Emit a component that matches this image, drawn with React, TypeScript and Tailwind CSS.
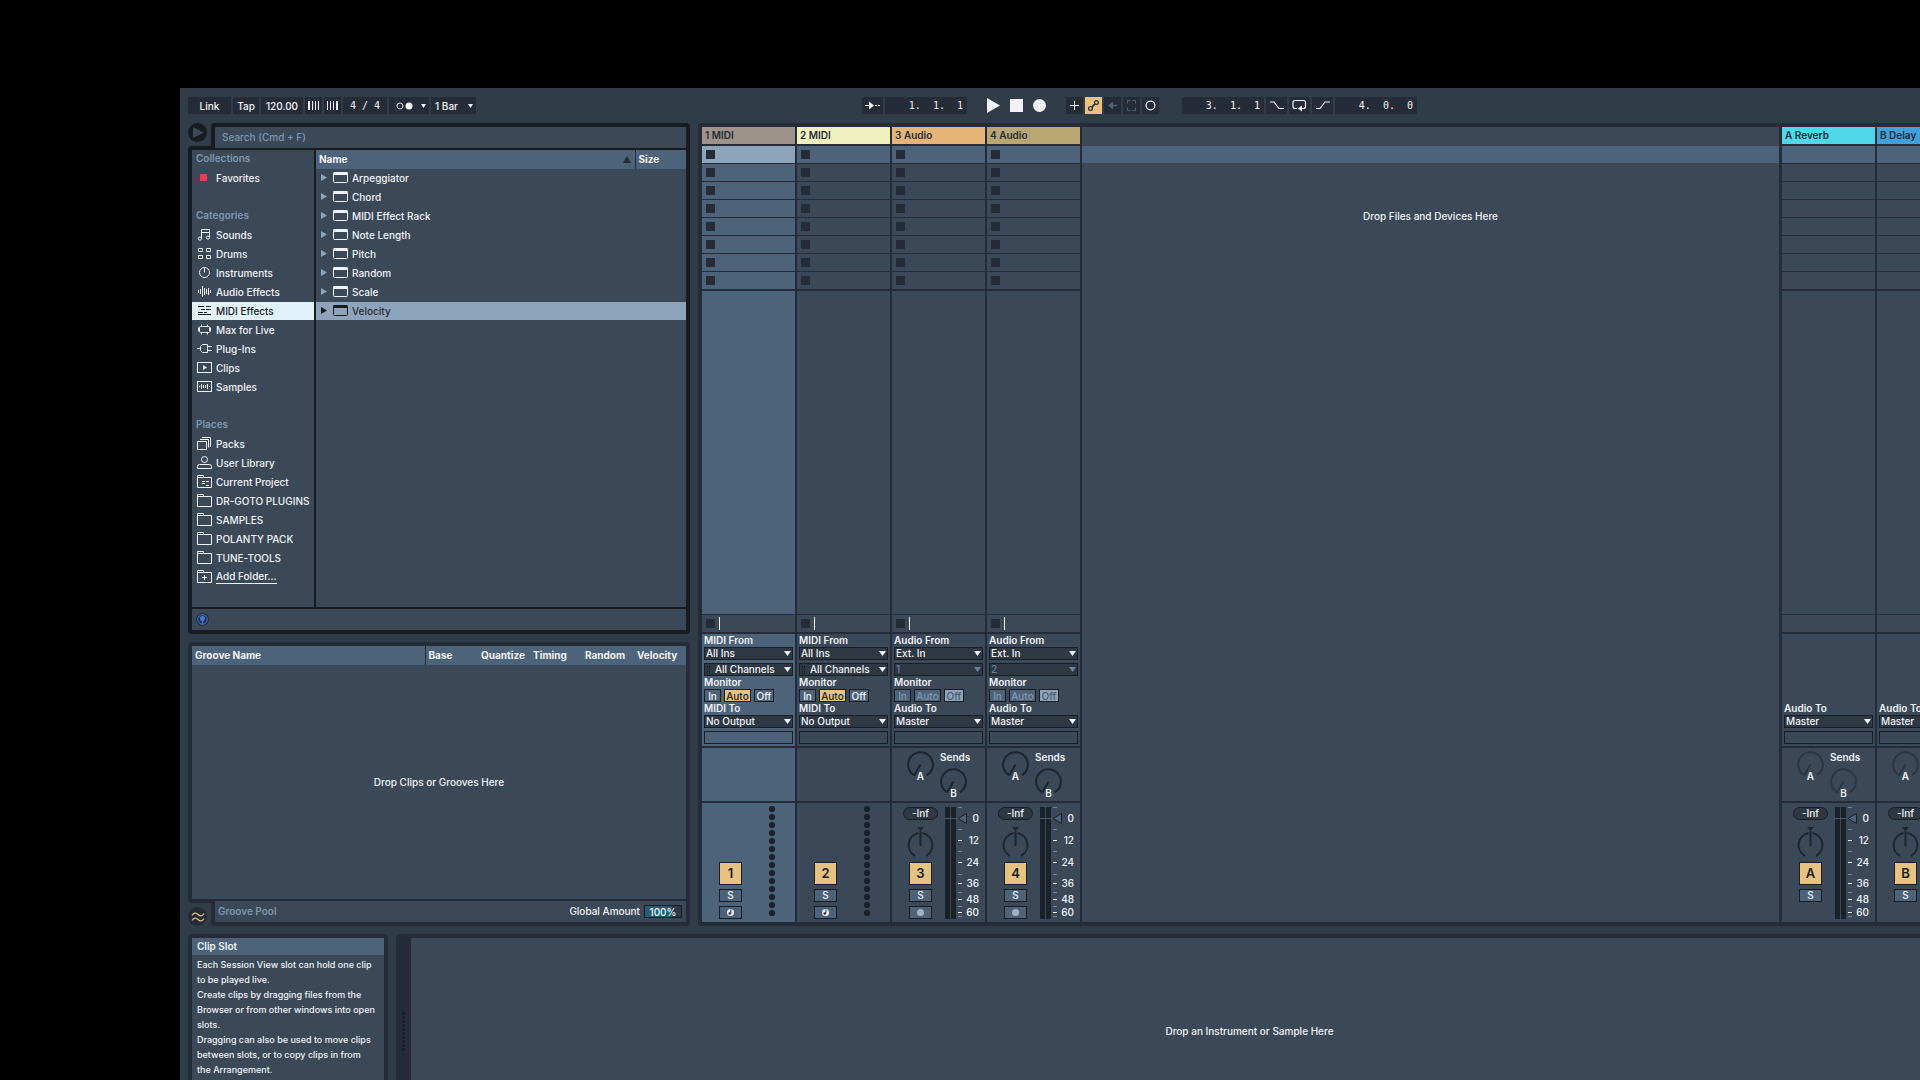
import React from "react";

type IconName =
  | "sounds"
  | "drums"
  | "instruments"
  | "audio"
  | "midi"
  | "max"
  | "plug"
  | "clips"
  | "samples"
  | "packs"
  | "user"
  | "project"
  | "folder"
  | "add";

const icons: Record<IconName, React.ReactNode> = {
  sounds: (
    <>
      <circle cx="2.9" cy="10.6" r="1.6" />
      <circle cx="10.9" cy="9.6" r="1.6" />
      <path d="M4.5 10.5V1.5h8v8M4.5 4.5h8" />
    </>
  ),
  drums: (
    <path d="M1.5 1.5h4v3h-4zM9.5 1.5h4v3h-4zM1.5 8.5h4v3h-4zM9.5 8.5h4v3h-4z" />
  ),
  instruments: (
    <>
      <circle cx="7.5" cy="6.5" r="5" />
      <path d="M7.5 1.5v5" />
    </>
  ),
  audio: (
    <path d="M1.5 5v3M3.5 4v5M5.5 1v11M7.5 3v7M9.5 4v5M11.5 3v7M13.5 5v3" />
  ),
  midi: <path d="M1 2.5h6M9 2.5h5M4 5.5h4M9 5.5h5M1 8.5h5M7 8.5h3M1 10.5h13" />,
  max: (
    <>
      <rect x="2.5" y="3.5" width="10" height="6" rx="1" />
      <path d="M4.5 3.5v-2M10.5 3.5v-2M4.5 9.5v2M10.5 9.5v2M1.5 4.500v4M13.5 4.500v4" />
    </>
  ),
  plug: (
    <path d="M0 6.5h3.5M5.5 2.5h5v8h-5l-2-2v-4zM10.5 4.5h4.500M10.5 8.5h4.500" />
  ),
  clips: (
    <>
      <rect x="0.5" y="1.5" width="14" height="10" />
      <path d="M6 4v5l4-2.500z" fill="currentColor" stroke="none" />
    </>
  ),
  samples: (
    <>
      <rect x="0.5" y="1.5" width="14" height="10" />
      <path d="M2.5 6v1M4.5 4v5M6.5 5v3M8.5 5v3M10.5 4v5M12.5 6v1" />
    </>
  ),
  packs: <path d="M.5 4.5h9v8h-9zM3 2.500h8.500v8M5 .5h8.500v9.500" />,
  user: (
    <>
      <circle cx="7.5" cy="3.500" r="3" />
      <path d="M.5 12.500v-2q0-2 2-2h10q2 0 2 2v2z" />
    </>
  ),
  project: (
    <path d="M.5 .5h6v2h8v10H.5zM.5 2.500h6M5 6.500h3M9 6.500h3M5 8.500h3M9 10.500h3" />
  ),
  folder: <path d="M.5 .5h6v2h8v10H.5zM.5 2.500h6" />,
  add: <path d="M.5 .5h6v2h8v10H.5zM.5 2.500h6M5 7.500h5M7.500 5v5" />,
};

const Icon = ({ name }: { name: IconName }) => (
  <svg
    width="15"
    height="13"
    viewBox="0 0 15 13"
    fill="none"
    stroke="currentColor"
    className="shrink-0"
  >
    {icons[name]}
  </svg>
);

const categories: { icon: IconName; label: string }[] = [
  { icon: "sounds", label: "Sounds" },
  { icon: "drums", label: "Drums" },
  { icon: "instruments", label: "Instruments" },
  { icon: "audio", label: "Audio Effects" },
  { icon: "midi", label: "MIDI Effects" },
  { icon: "max", label: "Max for Live" },
  { icon: "plug", label: "Plug-Ins" },
  { icon: "clips", label: "Clips" },
  { icon: "samples", label: "Samples" },
];

const places: { icon: IconName; label: string }[] = [
  { icon: "packs", label: "Packs" },
  { icon: "user", label: "User Library" },
  { icon: "project", label: "Current Project" },
  { icon: "folder", label: "DR-GOTO PLUGINS" },
  { icon: "folder", label: "SAMPLES" },
  { icon: "folder", label: "POLANTY PACK" },
  { icon: "folder", label: "TUNE-TOOLS" },
  { icon: "add", label: "Add Folder..." },
];

const devices = [
  "Arpeggiator",
  "Chord",
  "MIDI Effect Rack",
  "Note Length",
  "Pitch",
  "Random",
  "Scale",
  "Velocity",
];

type Track = {
  name: string;
  key: string;
  kind: "midi" | "audio" | "return";
  color: string;
  selected?: boolean;
  input?: string;
};

const tracks: Track[] = [
  { name: "1 MIDI", key: "1", kind: "midi", color: "bg-[#9d938c]", selected: true },
  { name: "2 MIDI", key: "2", kind: "midi", color: "bg-[#eff2bf]" },
  { name: "3 Audio", key: "3", kind: "audio", color: "bg-[#e6b575]", input: "1" },
  { name: "4 Audio", key: "4", kind: "audio", color: "bg-[#b9a771]", input: "2" },
];

const returns: Track[] = [
  { name: "A Reverb", key: "A", kind: "return", color: "bg-[#4fd8ea]" },
  { name: "B Delay", key: "B", kind: "return", color: "bg-[#3fa2dc]" },
];

/* ---------- Transport ---------- */

const toolButton =
  "flex h-[17px] items-center justify-center bg-[#252c37] text-[#f0f2f7]";

const TimeField = ({ label, value, width }: { label: string; value: string; width: string }) => (
  <input
    aria-label={label}
    defaultValue={value}
    className={`h-[17px] bg-[#252c37] pr-1 text-right font-['DejaVu_Sans_Mono',monospace] text-[10px] text-[#f0f2f7] outline-none ${width}`}
  />
);

const Transport = () => {
  return (
    <div className="grid grid-cols-[1fr_auto_1fr] items-center py-[9px] pr-[9px] pl-2">
      <div className="flex gap-[2px]">
        <button className={`${toolButton} w-[43px]`}>Link</button>
        <button className={`${toolButton} w-[26px]`}>Tap</button>
        <input
          aria-label="Tempo"
          defaultValue="120.00"
          className="h-[17px] w-[42px] bg-[#252c37] text-center text-[#f0f2f7] outline-none"
        />
        <button aria-label="Nudge down" className={`${toolButton} w-[17px]`}>
          <svg width="11" height="9" stroke="currentColor">
            <path d="M1 0v9" strokeWidth="2" />
            <path d="M4.500 0v9M7.500 0v9M10.500 0v9" />
          </svg>
        </button>
        <button aria-label="Nudge up" className={`${toolButton} w-[17px]`}>
          <svg width="11" height="9" stroke="currentColor">
            <path d="M.5 0v9M3.500 0v9M6.500 0v9" />
            <path d="M10 0v9" strokeWidth="2" />
          </svg>
        </button>
        <TimeField label="Time signature" value="4 / 4" width="w-[44px] pr-[7px]" />
        <button aria-label="Metronome" className={`${toolButton} w-[40px] gap-2 pl-1`}>
          <svg width="17" height="8" fill="none" stroke="currentColor">
            <circle cx="4" cy="4" r="3" />
            <circle cx="13" cy="4" r="3.500" fill="currentColor" stroke="none" />
          </svg>
          <svg width="5" height="4" fill="currentColor">
            <path d="M0 0h5L2.500 4z" />
          </svg>
        </button>
        <div className="relative">
          <select
            aria-label="Quantization"
            className="h-[17px] w-[45px] appearance-none bg-[#252c37] pl-1 text-[#f0f2f7] outline-none"
          >
            <option>1 Bar</option>
          </select>
          <svg
            width="5"
            height="4"
            fill="currentColor"
            className="pointer-events-none absolute top-[7px] right-[3px]"
          >
            <path d="M0 0h5L2.500 4z" />
          </svg>
        </div>
      </div>

      <div className="flex gap-[2px]">
        <button aria-label="Follow" className={`${toolButton} w-[21px]`}>
          <svg width="15" height="9" stroke="currentColor" fill="none">
            <path d="M0 4.500h5M10 4.500h2M13 4.500h2" />
            <path d="M4 0.500v8l5-4z" fill="currentColor" stroke="none" />
          </svg>
        </button>
        <TimeField label="Position" value="1.  1.  1" width="w-[82px]" />
        <div className="flex items-center gap-[10px] px-[18px] text-[#f0f2f7]">
          <button aria-label="Play">
            <svg width="13" height="15" fill="currentColor">
              <path d="M0 0v15l13-7.500z" />
            </svg>
          </button>
          <button aria-label="Stop" className="size-[13px] bg-current" />
          <button aria-label="Record" className="size-[13px] rounded-full bg-current" />
        </div>
        <button aria-label="Overdub" className={`${toolButton} w-[17px]`}>
          <svg width="9" height="9" stroke="currentColor">
            <path d="M4.500 0v9M0 4.500h9" />
          </svg>
        </button>
        <button
          aria-label="Automation arm"
          className="flex h-[17px] w-[17px] items-center justify-center bg-[#e8c27e] text-[#252c37]"
        >
          <svg width="11" height="11" stroke="currentColor" fill="none" strokeWidth="1.200">
            <circle cx="8.500" cy="2.500" r="1.900" />
            <circle cx="2.500" cy="8.500" r="1.900" />
            <path d="M7.200 3.900L3.800 7.100" strokeWidth="1.600" />
          </svg>
        </button>
        <button aria-label="Re-enable automation" className={`${toolButton} w-[17px]`}>
          <svg width="9" height="9" className="text-[#4c6379]" stroke="currentColor" fill="none">
            <path d="M3 4.500h6" strokeWidth="1.500" />
            <path d="M0 4.500L5 .5v8z" fill="currentColor" stroke="none" />
          </svg>
        </button>
        <button aria-label="Capture" className={`${toolButton} w-[17px]`}>
          <svg width="9" height="11" className="text-[#4c6379]" stroke="currentColor" fill="none">
            <path d="M.5 3.500v-3h3M5.500 .5h3v3M8.500 7.500v3h-3M3.500 10.500h-3v-3" />
          </svg>
        </button>
        <button aria-label="Session record" className={`${toolButton} w-[17px]`}>
          <svg width="11" height="11" stroke="currentColor" fill="none" strokeWidth="1.200">
            <circle cx="5.500" cy="5.500" r="4.400" />
          </svg>
        </button>
        <div className="w-[19px]" />
        <TimeField label="Loop start" value="3.  1.  1" width="w-[82px]" />
        <button aria-label="Punch in" className={`${toolButton} w-[21px]`}>
          <svg width="14" height="9" stroke="currentColor" fill="none" strokeWidth="1.200">
            <path d="M0 1h4l5 6.500h5" />
          </svg>
        </button>
        <button aria-label="Loop" className={`${toolButton} w-[21px]`}>
          <svg width="15" height="13" stroke="currentColor" fill="none" strokeWidth="1.200">
            <path d="M5 9.500H3q-2 0-2-2v-4q0-2 2-2h8.500q2 0 2 2v4q0 2-2 2H9" />
            <path d="M10 6.500v6L6 9.500z" fill="currentColor" stroke="none" />
          </svg>
        </button>
        <button aria-label="Punch out" className={`${toolButton} w-[21px]`}>
          <svg width="14" height="9" stroke="currentColor" fill="none" strokeWidth="1.200">
            <path d="M0 7.500h4L9 1h5" />
          </svg>
        </button>
        <TimeField label="Loop length" value="4.  0.  0" width="w-[82px]" />
      </div>
    </div>
  );
};

/* ---------- Browser ---------- */

const SideItem = ({ icon, label }: { icon: IconName; label: string }) => {
  const active = label === "MIDI Effects";
  return (
    <li className="h-[19px]">
      <button
        className={`flex h-[18px] w-full items-center gap-1 pb-px pl-[5px] whitespace-nowrap ${
          active ? "bg-[#e1f2fb] text-[#181b1f]" : ""
        }`}
      >
        <Icon name={icon} />
        <span className={icon === "add" ? "border-b border-current leading-[13px]" : ""}>
          {label}
        </span>
      </button>
    </li>
  );
};

const sideHeading = "h-[19px] pl-1 leading-[17px] font-semibold text-[#8097b0]";

const Browser = () => {
  return (
    <section>
      <div className="flex justify-between">
        <button
          aria-label="Hide browser"
          className="flex size-[19px] items-center justify-center rounded-full bg-[#181b1f]"
        >
          <svg width="12" height="11" fill="#3a4858">
            <path d="M1 0v11l11-5.500z" />
          </svg>
        </button>
        <div className="w-[479px] rounded-t bg-[#181b1f] px-1 pt-1">
          <input
            aria-label="Search"
            placeholder="Search (Cmd + F)"
            className="block h-[21px] w-full bg-[#3a4858] pb-px pl-[7px] outline-none placeholder:text-[#8097b0] placeholder:opacity-100"
          />
        </div>
      </div>
      <div className="-mt-[2px] rounded-b rounded-tl bg-[#181b1f] p-1">
        <div className="flex h-[457px] gap-[2px]">
          <nav className="w-[122px] bg-[#3a4858]">
            <h3 className={sideHeading}>Collections</h3>
            <button className="flex h-[19px] items-center gap-[9px] pb-[2px] pl-2">
              <span className="size-[7px] bg-[#e0404e]" />
              Favorites
            </button>
            <h3 className={`${sideHeading} mt-[19px]`}>Categories</h3>
            <ul>
              {categories.map((c) => (
                <SideItem key={c.label} {...c} />
              ))}
            </ul>
            <h3 className={`${sideHeading} mt-[19px]`}>Places</h3>
            <ul>
              {places.map((p) => (
                <SideItem key={p.label} {...p} />
              ))}
            </ul>
          </nav>
          <div className="flex-1 bg-[#3a4858]">
            <table className="w-full table-fixed">
              <thead>
                <tr className="h-[19px] bg-[#4c6379] text-left">
                  <th className="p-0 pb-px pl-[3px]">
                    <div className="flex items-center justify-between pr-1">
                      Name
                      <svg width="8" height="7" fill="#252c37">
                        <path d="M4 0l4 7H0z" />
                      </svg>
                    </div>
                  </th>
                  <th className="w-[51px] border-l border-[#252c37] p-0 pb-px pl-[3px]">Size</th>
                </tr>
              </thead>
              <tbody>
                {devices.map((d) => (
                  <tr key={d}>
                    <td colSpan={2} className="p-0">
                      <div
                        className={`mb-px flex h-[18px] items-center pb-px pl-[5px] ${
                          d === "Velocity" ? "bg-[#8ea4bb] text-[#252c37]" : ""
                        }`}
                      >
                        <svg
                          width="6"
                          height="7"
                          className={d === "Velocity" ? "text-[#181b1f]" : "text-[#8ea4bb]"}
                          fill="currentColor"
                        >
                          <path d="M0 0v7l6-3.500z" />
                        </svg>
                        <svg
                          width="15"
                          height="11"
                          fill="none"
                          stroke="currentColor"
                          className={`mr-1 ml-[6px] ${d === "Velocity" ? "text-[#181b1f]" : ""}`}
                        >
                          <rect x=".5" y=".5" width="14" height="10" rx="1" />
                          <path d="M.5 1.500h14" strokeWidth="3" />
                        </svg>
                        {d}
                      </div>
                    </td>
                  </tr>
                ))}
              </tbody>
            </table>
          </div>
        </div>
        <div className="mt-[2px] flex h-[21px] items-center bg-[#3a4858] pl-1">
          <button aria-label="Preview">
            <svg width="13" height="13" fill="none">
              <circle cx="6.500" cy="6.500" r="6" fill="#1e2d50" stroke="#252c37" />
              <circle cx="6.500" cy="6.500" r="4.800" stroke="#4a7bd0" />
              <circle cx="6.500" cy="5.500" r="2.500" fill="#4a7bd0" />
              <path d="M6.500 6v5.500" stroke="#4a7bd0" strokeWidth="1.500" />
            </svg>
          </button>
        </div>
      </div>
    </section>
  );
};

/* ---------- Groove pool ---------- */

const GroovePool = () => {
  return (
    <section>
      <div className="rounded-t rounded-bl bg-[#252c37] p-1">
        <table className="w-full table-fixed bg-[#4c6379]">
          <thead>
            <tr className="h-[19px] text-left">
              <th className="p-0 pb-px pl-[3px]">Groove Name</th>
              <th className="w-[56px] border-l border-[#252c37] p-0 pb-px pl-[3px]">Base</th>
              <th className="w-[52px] p-0 pb-px">Quantize</th>
              <th className="w-[52px] p-0 pb-px">Timing</th>
              <th className="w-[52px] p-0 pb-px">Random</th>
              <th className="w-[49px] p-0 pb-px">Velocity</th>
            </tr>
          </thead>
        </table>
        <div className="flex h-[234px] items-center justify-center bg-[#3a4858] pb-px">
          Drop Clips or Grooves Here
        </div>
      </div>
      <div className="-mt-[2px] flex items-end justify-between">
        <button
          aria-label="Toggle groove pool"
          className="flex size-[19px] items-center justify-center rounded-full bg-[#252c37]"
        >
          <svg width="14" height="10" fill="none" stroke="#e8c27e" strokeWidth="1.300">
            <path d="M1 3.500C3 .5 5 .5 7 2.500S11 4.500 13 1.500M1 8.500C3 5.500 5 5.500 7 7.500S11 9.500 13 6.500" />
          </svg>
        </button>
        <div className="w-[479px] rounded-b bg-[#252c37] px-1 pb-1">
          <div className="flex h-[21px] items-center bg-[#3a4858] pr-1 pl-[3px]">
            <h2 className="flex-1 pb-px font-semibold text-[#8097b0]">Groove Pool</h2>
            <label htmlFor="global-amount" className="mr-1 pb-px">
              Global Amount
            </label>
            <input
              id="global-amount"
              defaultValue="100%"
              className="h-[13px] w-[38px] border border-[#181b1f] bg-linear-to-r from-[#285b75] from-75% to-[#2d3a47] to-75% text-center outline-none"
            />
          </div>
        </div>
      </div>
    </section>
  );
};

/* ---------- Session view ---------- */

const Dropdown = ({
  label,
  value,
  disabled,
  grip,
}: {
  label: string;
  value: string;
  disabled?: boolean;
  grip?: boolean;
}) => (
  <div className={`relative h-[13px] ${disabled ? "text-[#6b8299]" : "text-[#f0f2f7]"}`}>
    <select
      aria-label={label}
      disabled={disabled}
      className={`block h-[13px] w-full appearance-none border border-[#181e26] bg-[#2d3843] leading-[11px] opacity-100 outline-none ${
        grip ? "pl-[10px]" : "pl-px"
      }`}
    >
      <option>{value}</option>
    </select>
    {grip && (
      <span className="pointer-events-none absolute top-[3px] left-[3px] h-[8px] w-[3px] border-x border-dotted border-[#181e26]" />
    )}
    <svg
      width="7"
      height="5"
      fill="currentColor"
      className="pointer-events-none absolute top-[4px] right-[2px]"
    >
      <path d="M0 0h7L3.500 5z" />
    </svg>
  </div>
);

const MonitorButtons = ({ audio }: { audio: boolean }) => {
  const idle = audio ? "bg-[#4c6379] text-[#8097b0]" : "bg-[#4c6379] text-[#f0f2f7]";
  const base = "flex h-[13px] items-center justify-center border border-[#181e26] leading-none";
  return (
    <div className="flex gap-[3px]">
      <button className={`${base} w-[17px] ${idle}`}>In</button>
      <button
        className={`${base} w-[27px] ${audio ? idle : "bg-[#e8c27e] text-[#181e26]"}`}
      >
        Auto
      </button>
      <button
        className={`${base} w-[20px] ${audio ? "bg-[#8ea4bb] text-[#4a5a6c]" : idle}`}
      >
        Off
      </button>
    </div>
  );
};

const ioLabel = "h-[13px] font-semibold leading-[13px]";

const TrackIO = ({ track }: { track: Track }) => {
  const type = track.kind === "midi" ? "MIDI" : "Audio";
  const midi = track.kind === "midi";
  return (
    <div
      className={`mb-[2px] flex h-[112px] flex-col justify-end px-[2px] pb-[2px] ${
        track.selected ? "bg-[#4c6379]" : "bg-[#3a4858]"
      }`}
    >
      {track.kind !== "return" && (
        <>
          <div className={ioLabel}>{type} From</div>
          <Dropdown label={`${track.name} input type`} value={midi ? "All Ins" : "Ext. In"} />
          <div className="h-[3px]" />
          <Dropdown
            label={`${track.name} input channel`}
            value={midi ? "All Channels" : track.input ?? ""}
            disabled={!midi}
            grip={midi}
          />
          <div className={ioLabel}>Monitor</div>
          <MonitorButtons audio={!midi} />
        </>
      )}
      <div className={ioLabel}>{type} To</div>
      <Dropdown label={`${track.name} output`} value={midi ? "No Output" : "Master"} />
      <div className="mt-[3px] h-[13px] border border-[#181e26]" />
    </div>
  );
};

const SendKnob = ({ label, dim }: { label: string; dim: boolean }) => (
  <button
    aria-label={`Send ${label}`}
    className="flex w-[27px] flex-col items-center font-semibold"
  >
    <svg
      width="27"
      height="25"
      fill="none"
      stroke={dim ? "#2b3641" : "#1e242c"}
      strokeWidth="2"
    >
      <path d="M7.300 24.300A12.400 12.400 0 1 1 19.700 24.300M13.500 13.500L7.300 24.300" />
    </svg>
    <span className="-mt-[6px] leading-[12px]">{label}</span>
  </button>
);

const Sends = ({ dim }: { dim: boolean }) => (
  <div className="flex gap-[6px] pl-[15px]">
    <div className="pt-[3px]">
      <SendKnob label="A" dim={dim} />
    </div>
    <div>
      <div className="h-[20px] font-semibold leading-[18px]">Sends</div>
      <SendKnob label="B" dim={dim} />
    </div>
  </div>
);

const majorTicks = [
  { y: 37.5, label: "12" },
  { y: 59.5, label: "24" },
  { y: 80.5, label: "36" },
  { y: 96.5, label: "48" },
  { y: 109.5, label: "60" },
];
const minorTicks = [4.5, 26.5, 48.5, 71.5, 89.5, 103.5, 113.5];

// Level meter with volume handle and dB scale
const LevelMeter = () => (
  <svg width="40" height="119" className="absolute top-0 left-[53px]">
    <path d="M0 4h5v112H0zM6 4h5v112H6z" fill="#1b2128" />
    <path d="M0 15.500h14" stroke="#4a5a6c" />
    {minorTicks.map((y) => (
      <path key={y} d={`M13 ${y}h4`} stroke="#75869a" />
    ))}
    <path d="M13 15.500l8.500-5v10z" fill="#4c6379" stroke="#181e26" />
    <text x="34" y="19" textAnchor="end" fill="#f0f2f7">
      0
    </text>
    {majorTicks.map((t) => (
      <g key={t.label}>
        <path d={`M13 ${t.y}h4`} stroke="#f0f2f7" />
        <text x="34" y={t.y + 3.5} textAnchor="end" fill="#f0f2f7">
          {t.label}
        </text>
      </g>
    ))}
  </svg>
);

const NoteMeter = () => (
  <svg width="8" height="119" fill="#1b2128" className="absolute top-0 left-[66px]">
    {Array.from({ length: 14 }, (_, i) => (
      <circle key={i} cx="4" cy={6 + i * 8} r="3.100" />
    ))}
  </svg>
);

const Mixer = ({ track }: { track: Track }) => {
  const midi = track.kind === "midi";
  return (
    <div
      className={`relative h-[119px] ${track.selected ? "bg-[#4c6379]" : "bg-[#3a4858]"}`}
    >
      <div className="flex h-full w-[57px] flex-col items-center pt-1">
        {!midi && (
          <>
            <button className="h-[13px] w-[35px] rounded-full border border-[#181e26] bg-[#2d3843] leading-[11px]">
              -Inf
            </button>
            <svg
              width="27"
              height="32"
              className="mt-[6px]"
              fill="none"
              stroke="#1e242c"
              strokeWidth="2"
            >
              <path d="M10 1h7l-3.500 4z" fill="#1e242c" stroke="none" />
              <path d="M8 30A12.400 12.400 0 0 1 11.500 7M15.500 7A12.400 12.400 0 0 1 19 30M13.500 5v15" />
            </svg>
          </>
        )}
        <button
          className={`size-[23px] border border-[#181e26] bg-[#e8c27e] text-[13px] font-semibold leading-none text-[#181e26] ${
            midi ? "mt-[55px]" : "mt-1"
          }`}
        >
          {track.key}
        </button>
        <button className="mt-1 h-[13px] w-[23px] border border-[#181e26] bg-[#4c6379] leading-[11px]">
          S
        </button>
        {track.kind !== "return" && (
          <button
            aria-label={`Arm ${track.name}`}
            className="mt-1 flex h-[13px] w-[23px] items-center justify-center border border-[#181e26] bg-[#4c6379]"
          >
            {midi ? (
              <svg width="7" height="7">
                <circle cx="3.500" cy="3.500" r="3.500" fill="#f0f2f7" />
                <circle cx="2.700" cy="4.500" r="1.200" fill="#252c37" />
                <path d="M3.900 4.500V.5" stroke="#252c37" fill="none" />
              </svg>
            ) : (
              <span className="size-[7px] rounded-full bg-[#a3b0c1]" />
            )}
          </button>
        )}
      </div>
      {midi ? <NoteMeter /> : <LevelMeter />}
    </div>
  );
};

const TrackColumn = ({ track }: { track: Track }) => {
  const isReturn = track.kind === "return";
  const body = track.selected ? "bg-[#4c6379]" : "bg-[#3a4858]";
  return (
    <div className="w-[93px] shrink-0">
      <div
        className={`mb-[2px] h-[17px] pl-[3px] font-semibold leading-[17px] text-[#252c37] ${track.color}`}
      >
        {track.name}
      </div>
      {Array.from({ length: 8 }, (_, i) => {
        let bg = body;
        if (i === 0) bg = track.selected ? "bg-[#8ea4bb]" : "bg-[#4c6379]";
        return (
          <div key={i} className={`mb-px flex h-[17px] items-center pl-1 ${bg}`}>
            {!isReturn && (
              <button
                aria-label={`Stop ${track.name} slot ${i + 1}`}
                className="size-[9px] bg-[#252c37]"
              />
            )}
          </div>
        );
      })}
      <div className={`mt-[2px] mb-px h-[323px] ${body}`} />
      <div className="mb-[2px] flex h-[17px] items-center gap-1 bg-[#3a4858] pl-1">
        {!isReturn && (
          <>
            <button
              aria-label={`Stop ${track.name}`}
              className="size-[9px] bg-[#252c37]"
            />
            <span className="h-[13px] w-px bg-[#f0f2f7]" />
          </>
        )}
      </div>
      <TrackIO track={track} />
      <div className={`mb-[2px] h-[53px] ${body}`}>
        {track.kind !== "midi" && <Sends dim={isReturn} />}
      </div>
      <Mixer track={track} />
    </div>
  );
};

const Session = () => {
  return (
    <section className="flex min-w-0 flex-1 gap-[2px] rounded bg-[#252c37] p-1">
      {tracks.map((t) => (
        <TrackColumn key={t.key} track={t} />
      ))}
      <div className="mr-px flex-1 bg-[#3a4858] pt-[19px] text-center">
        <div className="h-[17px] bg-[#4c6379]" />
        <p className="mt-[46px]">Drop Files and Devices Here</p>
      </div>
      {returns.map((t) => (
        <TrackColumn key={t.key} track={t} />
      ))}
      <div className="w-[116px] shrink-0 bg-[#3a4858]" />
    </section>
  );
};

/* ---------- Bottom ---------- */

const InfoView = () => {
  return (
    <section className="w-[200px] rounded-t bg-[#252c37] px-1 pt-1">
      <div className="h-full bg-[#3a4858]">
        <h2 className="h-[17px] bg-[#4c6379] pl-[5px] font-semibold leading-[17px]">Clip Slot</h2>
        <div className="pt-[2px] pl-[5px] text-[9px] leading-[15px] whitespace-nowrap">
          <p>
            Each Session View slot can hold one clip
            <br />
            to be played live.
          </p>
          <p>
            Create clips by dragging files from the
            <br />
            Browser or from other windows into open
            <br />
            slots.
          </p>
          <p>
            Dragging can also be used to move clips
            <br />
            between slots, or to copy clips in from
            <br />
            the Arrangement.
          </p>
        </div>
      </div>
    </section>
  );
};

const DeviceView = () => {
  return (
    <section className="flex flex-1 rounded-t bg-[#252c37] pt-1 pr-1">
      <div className="flex w-[15px] justify-center">
        <svg width="3" height="39" className="mt-[74px]" fill="#1b2026">
          {Array.from({ length: 10 }, (_, i) => (
            <rect key={i} y={i * 4} width="3" height="3" rx="1" />
          ))}
        </svg>
      </div>
      <div className="flex-1 bg-[#3a4858] pt-[86px] text-center">
        Drop an Instrument or Sample Here
      </div>
    </section>
  );
};

export default function App() {
  return (
    <div className="h-screen overflow-hidden bg-black pt-[88px] pl-[180px] font-['Inter',sans-serif] text-[10px] font-medium leading-[14px] text-[#f0f2f7]">
      <main className="flex h-full w-screen flex-col bg-[#303d49]">
        <Transport />
        <div className="flex gap-2 px-2">
          <div className="flex w-[502px] shrink-0 flex-col gap-2">
            <Browser />
            <GroovePool />
          </div>
          <Session />
        </div>
        <div className="mt-2 flex flex-1 gap-2 px-2">
          <InfoView />
          <DeviceView />
        </div>
      </main>
    </div>
  );
}
